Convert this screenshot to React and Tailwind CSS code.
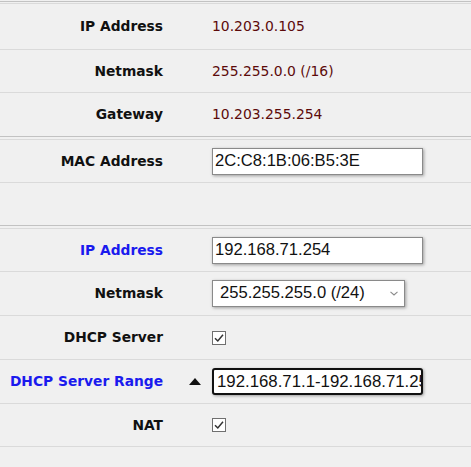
import React from "react";

const labelFont = { fontFamily: '"DejaVu Sans", Verdana, sans-serif' };

function Row({ label, blue, children, h, dark, extra }) {
  return (
    <div
      className={`flex items-center border-b ${dark ? "border-[#c2c2c2]" : "border-[#dadada]"} ${h}`}
    >
      <div
        className={`w-[163px] shrink-0 text-right font-bold text-[13.8px] ${blue ? "text-[#1a1aee]" : "text-[#111]"}`}
        style={labelFont}
      >
        {label}
      </div>
      <div className="w-[49px] shrink-0 flex justify-end pr-[11px]">{extra}</div>
      <div className="flex items-center">{children}</div>
    </div>
  );
}

function Value({ children }) {
  return (
    <span className="text-[13.9px] text-[#5c0a0a]" style={labelFont}>
      {children}
    </span>
  );
}

const inputFont = { fontFamily: '"Liberation Sans", Arial, sans-serif' };

function TextBox({ value }) {
  return (
    <div
      className="w-[211px] h-[27px] bg-white border border-[#8a8a8a] pl-[2px] flex items-center overflow-hidden whitespace-nowrap text-[16.6px] text-[#111] shadow-[1px_1px_3px_rgba(0,0,0,0.35)]"
      style={inputFont}
    >
      {value}
    </div>
  );
}

function Check() {
  return (
    <div className="w-[14px] h-[14px] bg-white border border-[#6f6f6f] flex items-center justify-center">
      <svg width="12" height="12" viewBox="0 0 12 12">
        <path d="M2 6.2 L4.8 9 L10 2.8" fill="none" stroke="#333" strokeWidth="1.5" />
      </svg>
    </div>
  );
}

export default function App() {
  return (
    <div className="w-[471px] h-[467px] bg-[#f0f0f0] overflow-hidden">
      <div className="h-[1px]" />
      <div className="h-[1px] bg-[#c2c2c2]" />
      <div className="h-[1px]" />
      <div className="h-[1px] bg-[#dadada]" />
      <Row label="IP Address" h="h-[46px]">
        <Value>10.203.0.105</Value>
      </Row>
      <Row label="Netmask" h="h-[43px]">
        <Value>255.255.0.0 (/16)</Value>
      </Row>
      <Row label="Gateway" h="h-[44px]" dark>
        <Value>10.203.255.254</Value>
      </Row>
      <div className="h-[2px]" />
      <div className="h-[1px] bg-[#dadada]" />
      <Row label="MAC Address" h="h-[43px]">
        <TextBox value="2C:C8:1B:06:B5:3E" />
      </Row>
      <div className="h-[43px] border-b border-[#c2c2c2]" />
      <div className="h-[2px]" />
      <div className="h-[1px] bg-[#dadada]" />
      <Row label="IP Address" blue h="h-[43px]">
        <TextBox value="192.168.71.254" />
      </Row>
      <Row label="Netmask" h="h-[44px]">
        <div
          className="w-[193px] h-[27px] bg-white border border-[#8a8a8a] pl-[7px] pr-[6px] flex items-center justify-between text-[16.6px] text-[#111] shadow-[1px_1px_3px_rgba(0,0,0,0.35)]"
          style={inputFont}
        >
          <span>255.255.255.0 (/24)</span>
          <svg width="8" height="5" viewBox="0 0 8 5">
            <path d="M0.5 0.8 L4 4 L7.5 0.8" fill="none" stroke="#8a8a8a" strokeWidth="1.1" />
          </svg>
        </div>
      </Row>
      <Row label="DHCP Server" h="h-[44px]">
        <Check />
      </Row>
      <Row
        label="DHCP Server Range"
        blue
        h="h-[44px]"
        extra={
          <svg width="12" height="7" viewBox="0 0 12 7">
            <polygon points="6,0 12,7 0,7" fill="#111" />
          </svg>
        }
      >
        <div
          className="w-[211px] h-[27px] bg-white border-2 border-[#111] rounded-[3px] pl-[3px] flex items-center overflow-hidden whitespace-nowrap text-[16.8px] text-[#111] shadow-[1px_1px_3px_rgba(0,0,0,0.35)]"
          style={inputFont}
        >
          192.168.71.1-192.168.71.254
        </div>
      </Row>
      <Row label="NAT" h="h-[43px]">
        <Check />
      </Row>
    </div>
  );
}
